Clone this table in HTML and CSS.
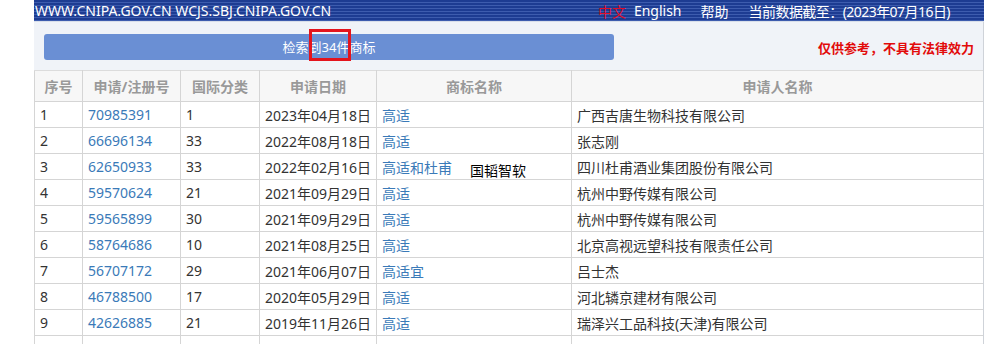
FILE: index.html
```html
<!DOCTYPE html>
<html lang="zh-CN">
<head>
<meta charset="utf-8">
<title>商标检索</title>
<link rel="stylesheet" href="styles.css">
</head>
<body>
<div class="page">
  <header class="topbar">
    <span class="site">WWW.CNIPA.GOV.CN WCJS.SBJ.CNIPA.GOV.CN</span>
    <nav class="nav">
      <span class="lang-cn">中文</span>
      <span class="lang-en">English</span>
      <span class="help">帮助</span>
      <span class="date">当前数据截至：(2023年07月16日)</span>
    </nav>
  </header>
  <main class="panel">
    <div class="toolbar">
      <div class="result-btn">检索到<span class="hl">34件</span>商标</div>
      <div class="notice">仅供参考，不具有法律效力</div>
    </div>
    <div class="table-wrap">
      <table class="results">
        <colgroup>
          <col class="c-no"><col class="c-reg"><col class="c-cls"><col class="c-date"><col class="c-name"><col class="c-app">
        </colgroup>
        <thead>
          <tr><th>序号</th><th>申请/注册号</th><th>国际分类</th><th>申请日期</th><th>商标名称</th><th>申请人名称</th></tr>
        </thead>
        <tbody>
          <tr><td>1</td><td class="link">70985391</td><td>1</td><td>2023年04月18日</td><td class="link">高适</td><td>广西吉唐生物科技有限公司</td></tr>
          <tr><td>2</td><td class="link">66696134</td><td>33</td><td>2022年08月18日</td><td class="link">高适</td><td>张志刚</td></tr>
          <tr><td>3</td><td class="link">62650933</td><td>33</td><td>2022年02月16日</td><td class="link">高适和杜甫</td><td>四川杜甫酒业集团股份有限公司</td></tr>
          <tr><td>4</td><td class="link">59570624</td><td>21</td><td>2021年09月29日</td><td class="link">高适</td><td>杭州中野传媒有限公司</td></tr>
          <tr><td>5</td><td class="link">59565899</td><td>30</td><td>2021年09月29日</td><td class="link">高适</td><td>杭州中野传媒有限公司</td></tr>
          <tr><td>6</td><td class="link">58764686</td><td>10</td><td>2021年08月25日</td><td class="link">高适</td><td>北京高视远望科技有限责任公司</td></tr>
          <tr><td>7</td><td class="link">56707172</td><td>29</td><td>2021年06月07日</td><td class="link">高适宜</td><td>吕士杰</td></tr>
          <tr><td>8</td><td class="link">46788500</td><td>17</td><td>2020年05月29日</td><td class="link">高适</td><td>河北辚京建材有限公司</td></tr>
          <tr><td>9</td><td class="link">42626885</td><td>21</td><td>2019年11月26日</td><td class="link">高适</td><td>瑞泽兴工品科技(天津)有限公司</td></tr>
          <tr><td>&nbsp;</td><td></td><td></td><td></td><td></td><td></td></tr>
        </tbody>
      </table>
      <div class="watermark">国韬智软</div>
    </div>
  </main>
</div>
</body>
</html>
```

FILE: styles.css
```css
* { box-sizing: border-box; }
html, body { margin: 0; padding: 0; background: #fff; }
body {
  font-family: "Noto Sans", "Noto Sans CJK SC", sans-serif;
  color: #333;
  overflow: hidden;
}
.page {
  width: 950px;
  margin-left: 34px;
}
.topbar {
  height: 22px;
  display: flex;
  align-items: center;
  color: #fff;
  font-size: 14px;
  background: repeating-linear-gradient(to bottom, #1d3c92 0px, #1d3c92 2px, #3d5cae 2px, #3d5cae 3px);
  border-bottom: 1px solid #d9dfea;
  white-space: nowrap;
}
.site { padding-left: 1px; }
.nav {
  margin-left: auto;
  display: flex;
  align-items: center;
  padding-right: 34px;
}
.lang-cn { color: #e0102a; margin-right: 8px; }
.lang-en { margin-right: 19px; }
.help { margin-right: 20px; }
.date { letter-spacing: -0.55px; }
.panel {
  background: #f0f3f8;
  border-right: 1px solid #cfd3d9;
  padding-top: 12px;
}
.toolbar {
  display: flex;
  align-items: center;
  padding-left: 10px;
  padding-right: 9px;
  height: 26px;
  margin-bottom: 10px;
}
.result-btn {
  width: 570px;
  height: 26px;
  line-height: 26px;
  border-radius: 3px;
  background: #6a8fd4;
  color: #fff;
  font-size: 13px;
  text-align: center;
  position: relative;
}
.hl {
  position: relative;
}
.hl::after {
  content: "";
  position: absolute;
  left: -13px;
  right: -2px;
  top: -9px;
  bottom: -5px;
  border: 3px solid #e4141d;
}
.notice {
  margin-left: auto;
  color: #e20a0a;
  font-weight: bold;
  font-size: 13px;
}
.table-wrap {
  position: relative;
  background: #fff;
}
.results {
  width: 100%;
  border-collapse: collapse;
  table-layout: fixed;
  font-size: 14px;
  background: #fff;
  border-left: 1px solid #d5d5d5;
}
.c-no { width: 48px; }
.c-reg { width: 98px; }
.c-cls { width: 79px; }
.c-date { width: 117px; }
.c-name { width: 195px; }
.results th {
  height: 31px;
  background: #f7f7f7;
  color: #999;
  font-weight: bold;
  text-align: center;
  border: 1px solid #d5d5d5;
  border-top: 1px solid #dcdcdc;
  padding: 0 5px;
}
.results td {
  height: 26px;
  border: 1px solid #d5d5d5;
  padding: 0 5px;
  white-space: nowrap;
}
.results tr td:last-child, .results tr th:last-child { border-right: none; }
.results td.link { color: #3a7ab8; }
.watermark {
  position: absolute;
  left: 436px;
  top: 90px;
  color: #000;
  font-size: 14px;
}
```
